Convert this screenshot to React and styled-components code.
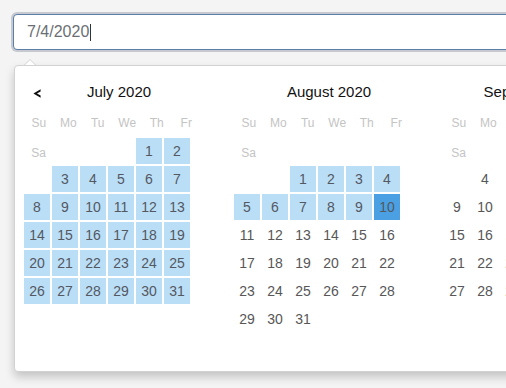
import React from "react";
import styled, { createGlobalStyle } from "styled-components";

const GlobalStyle = createGlobalStyle`
  html, body {
    margin: 0;
    padding: 0;
    background: #f4f4f4;
    overflow: hidden;
    width: 506px;
    height: 388px;
  }
  body {
    font-family: "Liberation Sans", Arial, sans-serif;
  }
`;

const Page = styled.div`
  width: 800px;
  padding: 14px 0 0 13px;
`;

const Input = styled.div`
  box-sizing: border-box;
  width: 560px;
  height: 36px;
  border: 1px solid #5b7fa8;
  border-radius: 4px;
  box-shadow: 0 0 0 2px #c6cacf;
  background: #fff;
  padding-left: 13px;
  display: flex;
  align-items: center;
  font-size: 16px;
  color: #6b6f74;
`;

const Caret = styled.span`
  display: inline-block;
  width: 1px;
  height: 17px;
  background: #333;
  margin-left: 1px;
`;

const Popup = styled.div`
  position: relative;
  box-sizing: border-box;
  margin: 15px 0 0 1px;
  width: 660px;
  height: 307px;
  background: #fff;
  border: 1px solid #d2d2d2;
  border-radius: 4px;
  box-shadow: 0 5px 10px rgba(0, 0, 0, 0.2);
  padding: 16px 0 0 9px;
  display: flex;
  gap: 20px;

  &::before {
    content: "";
    position: absolute;
    left: 9px;
    top: -7px;
    border-left: 6px solid transparent;
    border-right: 6px solid transparent;
    border-bottom: 6px solid #d2d2d2;
  }
  &::after {
    content: "";
    position: absolute;
    left: 10px;
    top: -6px;
    border-left: 5px solid transparent;
    border-right: 5px solid transparent;
    border-bottom: 5px solid #fff;
  }
`;

const NavButton = styled.button`
  position: absolute;
  left: 16px;
  top: 22px;
  width: 11px;
  height: 11px;
  padding: 0;
  border: 0;
  background: transparent;
  display: flex;
  align-items: center;
  justify-content: center;
  cursor: pointer;
`;

const Month = styled.div`
  flex: none;
  width: 190px;
  display: flex;
  flex-direction: column;
`;

const Title = styled.div`
  height: 20px;
  line-height: 20px;
  margin-bottom: 8px;
  text-align: center;
  font-size: 15px;
  color: #111;
`;

const WeekHead = styled.div`
  display: flex;
  height: 28px;
`;

const DayName = styled.div`
  width: 29.5px;
  flex: none;
  text-align: center;
  line-height: 26px;
  font-size: 12px;
  color: #c4c4c4;
`;

const SaName = styled(DayName)`
  width: auto;
  padding: 2px 0 0 3px;
`;

const Days = styled.div`
  display: grid;
  grid-template-columns: repeat(6, 26px);
  grid-auto-rows: 26px;
  gap: 2px;
`;

const Cell = styled.div`
  text-align: center;
  line-height: 26px;
  font-size: 14px;
  color: ${(p) => (p.$state === "none" ? "#575757" : "#535861")};
  background: ${(p) =>
    p.$state === "sel"
      ? "#4aa0e2"
      : p.$state === "range"
      ? "#bbdef7"
      : "transparent"};
`;

const months = [
  { name: "July 2020", lead: 3, days: 31, range: [1, 31], sel: null },
  { name: "August 2020", lead: 6, days: 31, range: [1, 9], sel: 10 },
  { name: "September 2020", lead: 2, days: 30, range: null, sel: null },
];

const heads = ["Su", "Mo", "Tu", "We", "Th", "Fr"];

function buildCells(m) {
  const items = [{ kind: "sa" }];
  for (let i = 0; i < m.lead; i++) items.push({ kind: "blank" });
  for (let d = 1; d <= m.days; d++) items.push({ kind: "day", d });
  items.splice(6, 0, { kind: "blank" });
  return items;
}

function stateOf(m, d) {
  if (m.sel === d) return "sel";
  if (m.range && d >= m.range[0] && d <= m.range[1]) return "range";
  return "none";
}

function MonthView({ m }) {
  const cells = buildCells(m);
  return (
    <Month>
      <Title>{m.name}</Title>
      <WeekHead>
        {heads.map((h) => (
          <DayName key={h}>{h}</DayName>
        ))}
      </WeekHead>
      <Days>
        {cells.map((c, i) =>
          c.kind === "sa" ? (
            <SaName key={i}>Sa</SaName>
          ) : c.kind === "blank" ? (
            <Cell key={i} $state="none" />
          ) : (
            <Cell key={i} $state={stateOf(m, c.d)}>
              {c.d}
            </Cell>
          )
        )}
      </Days>
    </Month>
  );
}

export default function App() {
  return (
    <>
      <GlobalStyle />
      <Page>
        <Input>
          7/4/2020
          <Caret />
        </Input>
        <Popup>
          <NavButton aria-label="Previous month">
            <svg width="8" height="9" viewBox="0 0 8 9">
              <path d="M7.6 0.3 L0.4 4.5 L7.6 8.7 L7.6 6.6 L4 4.5 L7.6 2.4 Z" fill="#111" />
            </svg>
          </NavButton>
          {months.map((m) => (
            <MonthView key={m.name} m={m} />
          ))}
        </Popup>
      </Page>
    </>
  );
}
